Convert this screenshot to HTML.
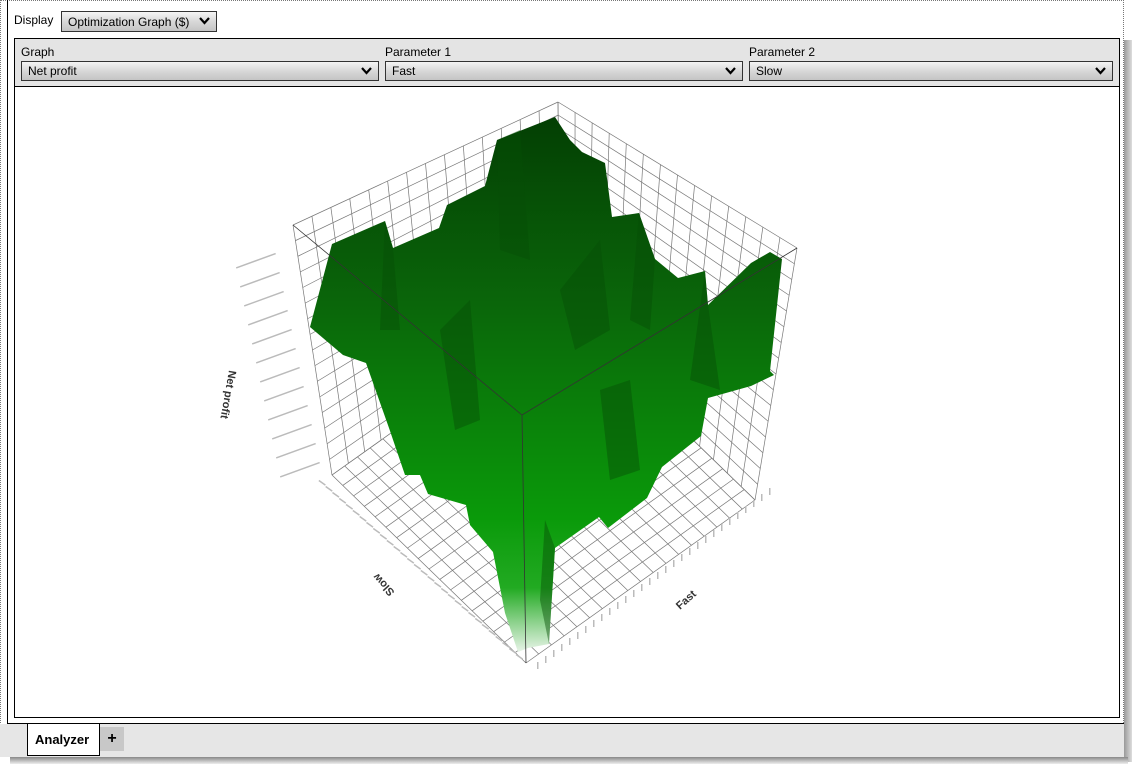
<!DOCTYPE html>
<html><head><meta charset="utf-8"><style>
*{margin:0;padding:0;box-sizing:border-box}
body{width:1135px;height:769px;background:#fff;position:relative;overflow:hidden;font-family:"Liberation Sans",Arial,sans-serif;font-size:12px;color:#000}
.a{position:absolute}
.sel{position:absolute;height:20px;border:1px solid #333;background:linear-gradient(#f4f4f4,#d8d8d8 50%,#c4c4c4);padding:2px 0 0 6px;font-size:12px}
.sel svg{position:absolute;right:6px;top:5px}
</style></head><body>
<div class="a" style="left:1124px;top:40px;width:8px;height:722px;background:linear-gradient(90deg,#999,#ddd)"></div>
<div class="a" style="left:10px;top:757px;width:1118px;height:7px;background:linear-gradient(#888,#eee)"></div>
<div class="a" style="left:0;top:0;width:1124px;height:757px;background:#fff;border-right:1px dotted #777;border-left:1px dotted #777;border-top:1px dotted #777"></div>
<div class="a" style="left:7px;top:0;width:1px;height:724px;background:#000"></div>
<div class="a" style="left:7px;top:723px;width:1117px;height:1px;background:#000"></div>
<div class="a" style="left:0;top:724px;width:1124px;height:33px;background:#e6e6e6"></div>
<div class="a" style="left:27px;top:724px;width:73px;height:32px;background:#fff;border:1px solid #000;border-top:none;font-weight:bold;font-size:13px;padding:8px 0 0 7px">Analyzer</div>
<div class="a" style="left:100px;top:727px;width:24px;height:24px;background:#c8c8c8;font-weight:bold;font-size:16px;text-align:center;line-height:24px">+</div>
<div class="a" style="left:14px;top:13px">Display</div>
<div class="sel" style="left:61px;top:11px;width:156px;height:21px;padding-top:3px">Optimization Graph ($)<svg width="11" height="8"><path d="M1 1L5.5 6L10 1" stroke="#000" stroke-width="2.2" fill="none"/></svg></div>
<div class="a" style="left:14px;top:38px;width:1106px;height:680px;border:1px solid #000;background:#fff"></div>
<div class="a" style="left:15px;top:39px;width:1104px;height:48px;background:#e4e4e4;border-bottom:1px solid #000"></div>
<div class="a" style="left:21px;top:45px">Graph</div>
<div class="a" style="left:385px;top:45px">Parameter 1</div>
<div class="a" style="left:749px;top:45px">Parameter 2</div>
<div class="sel" style="left:21px;top:61px;width:358px">Net profit<svg width="11" height="8"><path d="M1 1L5.5 6L10 1" stroke="#000" stroke-width="2.2" fill="none"/></svg></div>
<div class="sel" style="left:385px;top:61px;width:358px">Fast<svg width="11" height="8"><path d="M1 1L5.5 6L10 1" stroke="#000" stroke-width="2.2" fill="none"/></svg></div>
<div class="sel" style="left:749px;top:61px;width:364px">Slow<svg width="11" height="8"><path d="M1 1L5.5 6L10 1" stroke="#000" stroke-width="2.2" fill="none"/></svg></div>
<svg class="a" style="left:0;top:0" width="1135" height="769">
<defs>
<linearGradient id="g" x1="0" y1="0" x2="0" y2="1" gradientUnits="objectBoundingBox">
<stop offset="0" stop-color="#033f03"/><stop offset="0.35" stop-color="#0a660a"/><stop offset="0.75" stop-color="#0a9a0a"/><stop offset="0.88" stop-color="#22aa22"/><stop offset="1" stop-color="#e8f4e8"/>
</linearGradient>
</defs>
<g id="grid" stroke="#777" stroke-width="0.7" fill="none"></g>
<polygon fill="url(#g)" points="310,327 332,244 385,221 393,248 439,228 447,205 485,186 497,140 555,117 570,140 582,152 605,163 612,217 639,213 655,259 678,278 705,271 708,305 751,263 770,252 782,259 770,371 774,375 751,386 708,398 701,436 662,467 647,498 608,528 599,517 555,548 549,644 528,648 518,652 505,613 493,552 470,525 466,505 428,494 420,475 405,475 389,428 366,363 343,355"/>
<g fill="#064e06" opacity="0.45">
<polygon points="385,221 393,248 400,330 380,330"/><polygon points="497,140 520,130 530,260 500,250"/><polygon points="639,213 655,259 650,330 630,320"/><polygon points="705,271 708,305 720,390 690,380"/><polygon points="555,548 549,644 540,600 545,520"/>
<polygon points="440,330 470,300 480,420 455,430"/><polygon points="560,290 600,240 610,330 575,350"/><polygon points="600,390 630,380 640,470 610,480"/>
</g>
<g stroke="#333" stroke-width="0.8" fill="none">
<path d="M293,225 L522,415 L797,248 M522,415 L526,663"/>
</g>
<text x="0" y="0" font-size="11" font-weight="bold" fill="#333" transform="translate(229,370) rotate(100)">Net profit</text>
<text x="0" y="0" font-size="11" font-weight="bold" fill="#333" transform="translate(395,592) rotate(228)">Slow</text>
<text x="0" y="0" font-size="11" font-weight="bold" fill="#333" transform="translate(680,610) rotate(-42)">Fast</text>
<g id="ticks" fill="#bbb"></g>
</svg>
<script>
var ns="http://www.w3.org/2000/svg",G=document.getElementById("grid");
function L(a,b){var p=document.createElementNS(ns,"line");p.setAttribute("x1",a[0]);p.setAttribute("y1",a[1]);p.setAttribute("x2",b[0]);p.setAttribute("y2",b[1]);G.appendChild(p);}
function lerp(a,b,t){return[a[0]+(b[0]-a[0])*t,a[1]+(b[1]-a[1])*t];}
function quad(A,B,C,D,nu,nv){for(var i=0;i<=nu;i++){var t=i/nu;L(lerp(A,B,t),lerp(D,C,t));}for(var j=0;j<=nv;j++){var s=j/nv;L(lerp(A,D,s),lerp(B,C,s));}}
quad([293,225],[558,102],[561,312],[332,475],14,16);
quad([558,102],[797,248],[755,500],[561,312],14,16);
quad([332,475],[561,312],[755,500],[526,663],18,18);
var T=document.getElementById("ticks");
for(var i=0;i<12;i++){var r=document.createElementNS(ns,"rect");r.setAttribute("x",235+i*4);r.setAttribute("y",260+i*19);r.setAttribute("width",42);r.setAttribute("height",1.5);r.setAttribute("transform","rotate(-20 "+(256+i*4)+" "+(261+i*19)+")");T.appendChild(r);}
for(var i=0;i<30;i++){var r=document.createElementNS(ns,"rect");r.setAttribute("x",318+i*6.8);r.setAttribute("y",482+i*6);r.setAttribute("width",8);r.setAttribute("height",1.5);r.setAttribute("transform","rotate(35 "+(322+i*6.8)+" "+(483+i*6)+")");T.appendChild(r);
var q=document.createElementNS(ns,"rect");q.setAttribute("x",537+i*8);q.setAttribute("y",662-i*6);q.setAttribute("width",1.5);q.setAttribute("height",7);T.appendChild(q);}
</script>
</body></html>
